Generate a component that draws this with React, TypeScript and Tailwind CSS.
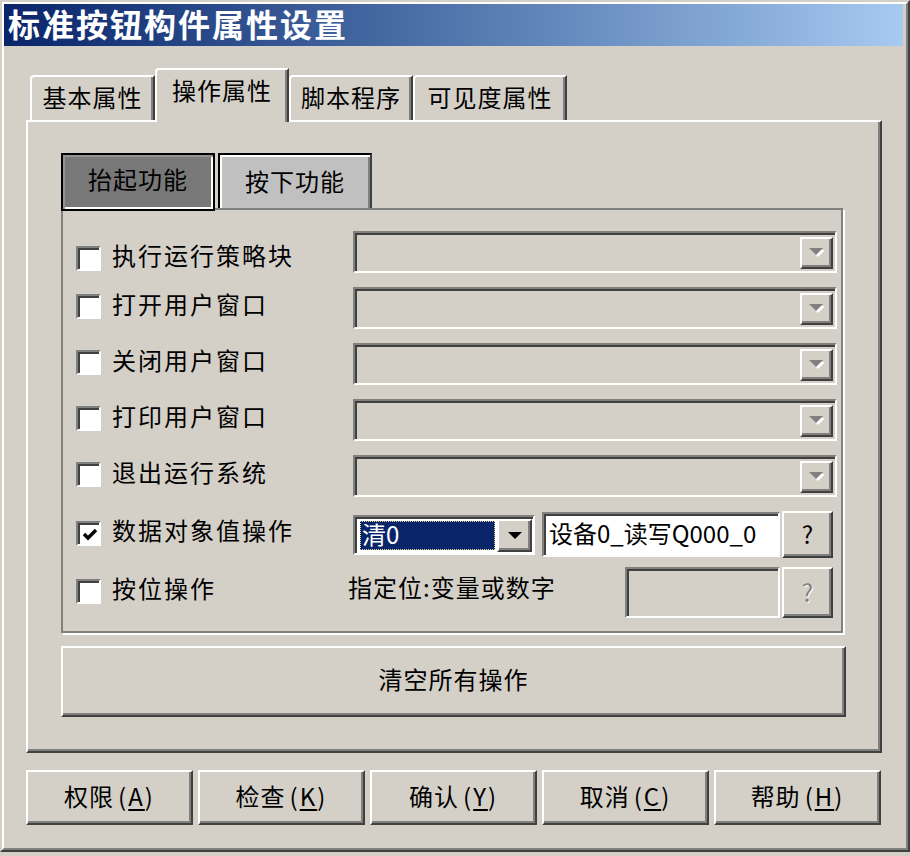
import React from "react";

// win classic bevels
const raised =
  "border-2 border-t-white border-l-white border-r-[#404040] border-b-[#404040] shadow-[inset_-2px_-2px_0_#808080]";
const sunken =
  "border-2 border-t-[#808080] border-l-[#808080] border-r-white border-b-white shadow-[inset_2px_2px_0_#404040]";

function Arrow({ disabled }: { disabled?: boolean }) {
  if (disabled) {
    return (
      <svg width="18" height="11" viewBox="0 0 18 11">
        <polygon points="3,2 17,2 10,9" fill="#ffffff" />
        <polygon points="1,0 15,0 8,7" fill="#808080" />
      </svg>
    );
  }
  return (
    <svg width="14" height="8" viewBox="0 0 14 8">
      <polygon points="0,0 14,0 7,7" fill="#000000" />
    </svg>
  );
}

function Checkbox({ checked }: { checked?: boolean }) {
  return (
    <span className={`w-[25px] h-[25px] shrink-0 bg-white flex items-center justify-center pl-[2px] pt-[2px] ${sunken}`}>
      {checked && (
        <svg width="16" height="13" viewBox="0 0 16 13">
          <path d="M2 6 L6 10 L14 2" stroke="#000" strokeWidth="3.4" fill="none" />
        </svg>
      )}
    </span>
  );
}

function DisabledCombo() {
  return (
    <div className={`w-[484px] h-[42px] flex items-center justify-end pr-[2px] pt-[2px] ${sunken}`}>
      <div className={`w-[33px] h-[32px] bg-[#d4d0c8] flex items-center justify-center ${raised}`}>
        <Arrow disabled />
      </div>
    </div>
  );
}

function Row({ label, checked, first }: { label: string; checked?: boolean; first?: boolean }) {
  return (
    <div className="flex items-center h-[42px]">
      <div className={`w-[290px] flex items-center gap-[11px] pl-[13px] ${first ? "mt-[12px]" : "mt-[-3px]"}`}>
        <Checkbox checked={checked} />
        <span className="tracking-[2px] pb-[6px]">{label}</span>
      </div>
      <DisabledCombo />
    </div>
  );
}

function Tab({ label, active, w }: { label: string; active?: boolean; w: string }) {
  return (
    <div
      className={`${w} ${
        active ? "h-[54px] mb-[-2px] relative z-10 pb-[12px]" : "h-[45px] pb-[4px]"
      } flex items-center justify-center bg-[#d4d0c8] border-t-2 border-l-2 border-r-2 border-t-white border-l-white border-r-[#404040] rounded-tl-[4px] shadow-[inset_-2px_0_0_#808080] tracking-[1px]`}
    >
      {label}
    </div>
  );
}

function FooterButton({ label, hot }: { label: string; hot: string }) {
  return (
    <button className={`w-[167px] h-[55px] bg-[#d4d0c8] flex items-center justify-center pb-[4px] ${raised}`}>
      <span className="tracking-[1px]">{label}</span>
      <span className="ml-[4px] tracking-[2px]">
        (<span className="underline underline-offset-[3px]">{hot}</span>)
      </span>
    </button>
  );
}

export default function App() {
  return (
    <div className="w-[910px] h-[856px] bg-[#d4d0c8] text-[24px] leading-none text-black font-['Noto_Sans_CJK_SC','Noto_Sans',sans-serif]">
      {/* window frame */}
      <div className="w-[910px] h-[852px] border-2 border-t-[#d4d0c8] border-l-[#d4d0c8] border-r-[#404040] border-b-[#404040]">
        <div className="w-full h-full border-2 border-t-white border-l-white border-r-[#808080] border-b-[#808080]">
          {/* title bar */}
          <div className="h-[42px] mr-[3px] bg-gradient-to-r from-[#0a246a] to-[#a6caf0] flex items-center pl-[4px] pb-[5px]">
            <span className="text-white font-bold text-[32px] tracking-[2px]">标准按钮构件属性设置</span>
          </div>

          {/* tabs */}
          <div className="mt-[22px] h-[52px] pl-[26px] flex items-end">
            <Tab label="基本属性" w="w-[125px]" />
            <Tab label="操作属性" w="w-[134px]" active />
            <Tab label="脚本程序" w="w-[124px]" />
            <Tab label="可见度属性" w="w-[154px]" />
          </div>

          {/* tab panel */}
          <div className={`ml-[22px] w-[856px] h-[633px] pl-[33px] pt-[31px] border-2 border-t-white border-l-white border-r-[#404040] border-b-[#404040] shadow-[inset_-2px_-2px_0_#808080]`}>
            {/* inner tabs */}
            <div className="flex items-start h-[55px]">
              <div className="w-[154px] h-[58px] relative z-10 bg-[#787878] border-2 border-black shadow-[inset_2px_2px_0_#949494,inset_-2px_-2px_0_#ffffff] flex items-center justify-center pb-[6px] tracking-[1px]">
                抬起功能
              </div>
              <div className="ml-[3px] w-[154px] h-[55px] bg-[#c0c0c0] border-2 border-b-0 border-black border-r-[#404040] shadow-[inset_2px_2px_0_#ffffff,inset_-2px_0_0_#808080] flex items-center justify-center pb-[2px] tracking-[1px]">
                按下功能
              </div>
            </div>

            {/* group */}
            <div className="w-[782px] h-[425px] border-2 border-[#808080] shadow-[2px_2px_0_#ffffff] pt-[21px] flex flex-col">
              <Row label="执行运行策略块" first />
              <div className="h-[14px]" />
              <Row label="打开用户窗口" />
              <div className="h-[14px]" />
              <Row label="关闭用户窗口" />
              <div className="h-[14px]" />
              <Row label="打印用户窗口" />
              <div className="h-[14px]" />
              <Row label="退出运行系统" />
              <div className="h-[14px]" />

              {/* data object row */}
              <div className="flex items-center h-[47px]">
                <div className="w-[290px] flex items-center gap-[11px] pl-[13px] mt-[-3px]">
                  <Checkbox checked />
                  <span className="tracking-[2px] pb-[6px]">数据对象值操作</span>
                </div>
                <div className={`w-[182px] h-[40px] bg-white flex items-center pl-[5px] pr-[1px] pt-[2px] gap-[2px] ${sunken}`}>
                  <div className="flex-1 h-[29px] bg-[#0a246a] border border-dotted border-[#e8d890] text-white flex items-center pl-[1px] pb-[4px]">
                    清0
                  </div>
                  <div className={`w-[35px] h-[33px] bg-[#d4d0c8] flex items-center justify-center ${raised}`}>
                    <Arrow />
                  </div>
                </div>
                <div className={`ml-[7px] w-[238px] h-[45px] bg-white flex items-center pl-[5px] pb-[4px] ${sunken}`}>
                  设备0_读写Q000_0
                </div>
                <div className={`ml-[2px] w-[51px] h-[47px] bg-[#d4d0c8] flex items-center justify-center pb-[2px] ${raised}`}>
                  ?
                </div>
              </div>
              <div className="h-[9px]" />

              {/* bit row */}
              <div className="flex items-center h-[51px]">
                <div className="w-[285px] flex items-center gap-[11px] pl-[13px] mt-[-3px]">
                  <Checkbox />
                  <span className="tracking-[2px] pb-[6px]">按位操作</span>
                </div>
                <div className="w-[277px] tracking-[1px] mt-[-11px]">指定位:变量或数字</div>
                <div className={`w-[155px] h-[51px] bg-[#d4d0c8] ${sunken}`} />
                <div className={`ml-[2px] w-[51px] h-[51px] bg-[#d4d0c8] flex items-center justify-center pb-[2px] text-[#808080] [text-shadow:1px_1px_0_#ffffff] ${raised}`}>
                  ?
                </div>
              </div>
            </div>

            <button className={`mt-[13px] w-[785px] h-[71px] bg-[#d4d0c8] flex items-center justify-center pb-[6px] tracking-[1px] ${raised}`}>
              清空所有操作
            </button>
          </div>

          {/* footer */}
          <div className="mt-[17px] pl-[22px] flex gap-[5px]">
            <FooterButton label="权限" hot="A" />
            <FooterButton label="检查" hot="K" />
            <FooterButton label="确认" hot="Y" />
            <FooterButton label="取消" hot="C" />
            <FooterButton label="帮助" hot="H" />
          </div>
        </div>
      </div>
    </div>
  );
}
